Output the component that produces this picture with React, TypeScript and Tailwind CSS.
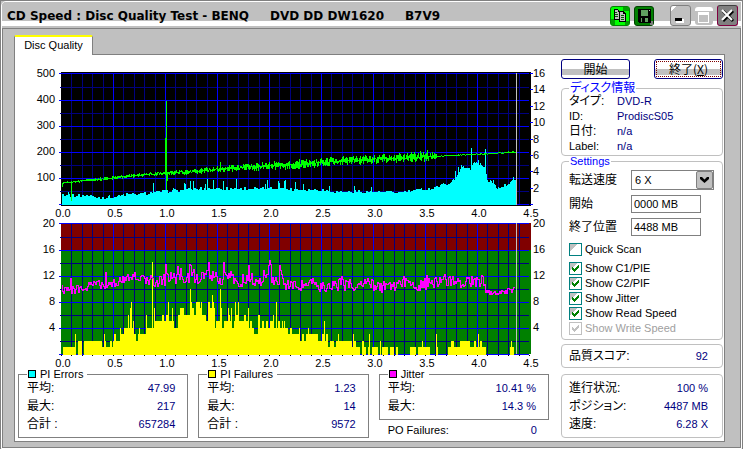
import React from "react";

type Point = [number, number];
type Band = [number, number, number];

const noise = (n: number, seed: number) => {
  const v = Math.sin(n * 127.1 + seed * 311.7) * 43758.5453;
  return v - Math.floor(v);
};

const at = (pts: Point[], x: number) => {
  for (let i = 1; i < pts.length; i++) {
    if (x <= pts[i][0]) {
      const [x0, y0] = pts[i - 1];
      const [x1, y1] = pts[i];
      return y0 + ((y1 - y0) * (x - x0)) / (x1 - x0);
    }
  }
  return pts[pts.length - 1][1];
};

const bar = (x: number, top: number, bottom: number) => `M${x} ${top}h1V${bottom}h-1z`;

/* PI errors: top of each column */
const piBase: Point[] = [
  [61, 194], [75, 195], [90, 195], [97, 197], [116, 196], [125, 194], [145, 193], [160, 191], [180, 190], [200, 188],
  [230, 188], [280, 188], [300, 189], [320, 189], [335, 191], [370, 191], [400, 192], [420, 189], [430, 188], [440, 185],
  [450, 182], [455, 178], [458, 171], [463, 167], [470, 168], [474, 161], [482, 166], [485, 167], [487, 180], [492, 182],
  [499, 189], [503, 186], [510, 181], [514, 178], [517, 178],
];
const piSpikes: Record<number, number> = {
  68: 192, 153: 183, 173: 188, 184: 183, 185: 184, 190: 181, 193: 181, 205: 184, 207: 179, 213: 180, 223: 181, 236: 179,
  265: 184, 267: 180, 278: 181, 279: 183, 284: 181, 285: 180, 295: 182, 303: 184, 329: 186, 354: 186, 371: 187,
  455: 171, 458: 167, 461: 165, 471: 148, 478: 160, 480: 163, 485: 149, 493: 180, 513: 177,
};
/* read speed: centre and spread */
const speedLine: Point[] = [
  [61, 183], [71, 182], [90, 180], [110, 178], [130, 176], [150, 174], [165, 173], [190, 172], [220, 169], [250, 167],
  [290, 165], [340, 161], [400, 158], [440, 156], [480, 154], [516, 152],
];
const speedSpread: Point[] = [
  [61, 1], [100, 2], [165, 2], [200, 3], [250, 4], [300, 5], [400, 5], [415, 6], [428, 7], [434, 4], [438, 1], [516, 1],
];
/* jitter: centre line and peaks */
const jitterLine: Point[] = [
  [62, 288], [68, 291], [75, 289], [90, 285], [100, 284], [106, 286], [120, 281], [130, 277], [135, 275], [145, 280],
  [160, 281], [170, 277], [180, 278], [190, 276], [200, 279], [208, 274], [220, 279], [230, 276], [240, 281], [250, 278],
  [262, 283], [268, 274], [273, 279], [280, 278], [284, 281], [290, 287], [300, 285], [308, 282], [318, 286],
  [340, 284], [355, 286], [370, 283], [380, 287], [390, 286], [400, 284], [405, 281], [415, 288], [425, 284], [435, 283],
  [445, 280], [470, 281], [483, 280], [486, 291], [495, 292], [505, 291], [515, 289],
];
const jitterPeaks: Record<number, number> = {
  71: 278, 106: 272, 166: 264, 178: 266, 181: 268, 190: 264, 191: 265, 194: 269, 207: 270, 209: 262, 224: 262, 249: 265,
  264: 270, 269: 265, 270: 260, 271: 264, 280: 265, 281: 270, 342: 276, 350: 279, 427: 275, 450: 276, 483: 276,
};
/* PI failures: lowest and highest count around each position */
const pifBands: Band[] = [
  [61, 0, 0], [63, 1, 1], [75, 0, 2], [90, 1, 2], [105, 1, 2], [113, 1, 3], [118, 2, 3], [124, 3, 4], [128, 4, 6],
  [132, 3, 4], [136, 2, 3], [139, 3, 4], [150, 3, 4], [155, 4, 6], [170, 4, 6], [178, 6, 7], [190, 6, 8], [200, 5, 8],
  [210, 7, 8], [215, 4, 8], [222, 4, 6], [235, 4, 6], [250, 3, 6], [260, 3, 5], [275, 3, 5], [285, 2, 4], [300, 2, 3],
  [320, 1, 3], [335, 1, 2], [350, 0, 2], [366, 0, 1], [401, 0, 0], [408, 0, 1], [451, 1, 2], [478, 1, 2], [486, 0, 0],
  [510, 1, 1], [514, 0, 0], [517, 0, 0],
];
const pifSpikes: Record<number, number> = {
  75: 3, 104: 3, 120: 4, 128: 6, 130: 7, 131: 8, 133: 5, 146: 6, 152: 14, 154: 7, 168: 8, 172: 7, 190: 10, 200: 7,
  212: 9, 220: 10, 228: 7, 231: 7, 235: 8, 238: 8, 248: 7, 273: 6, 276: 8, 282: 5, 299: 4, 308: 4, 324: 5, 338: 3,
  353: 3, 369: 3, 380: 2, 422: 2, 436: 3, 452: 2, 478: 3, 511: 2,
};

const range = (a: number, b: number) => Array.from({ length: b - a }, (_, i) => a + i);

const piPath = range(62, 517)
  .map((x) => {
    const step = Math.floor(x / 2);
    const y = piSpikes[x] ?? Math.round(at(piBase, x) - noise(step, 1) * 3 + 2);
    return bar(x, y, 205);
  })
  .join("");

const speedPath =
  range(62, 516)
    .map((x) => {
      const c = at(speedLine, x);
      const s = at(speedSpread, x);
      const up = Math.round(c - noise(x, 2) * s);
      return bar(x, up, Math.max(up + 1, Math.round(c + noise(x, 3) * s)));
    })
    .join("") +
  bar(62, 183, 187) + bar(71, 182, 201) + bar(165, 138, 175) + bar(166, 101, 190) + bar(167, 172, 181) + bar(220, 162, 172);

const jitterY = (x: number) =>
  jitterPeaks[x] ?? Math.round(at(jitterLine, x) + (noise(x, 4) - 0.5) * (x > 486 ? 5 : x < 150 ? 8 : 12));

const jitterPath = range(62, 515)
  .map((x) => {
    const a = jitterY(x);
    const b = jitterY(x + 1);
    return bar(x, Math.min(a, b), Math.max(a, b) + 1);
  })
  .join("");

const pifPath = range(62, 515)
  .map((x) => {
    let band = pifBands[0];
    for (const b of pifBands) if (b[0] <= x) band = b;
    const r = noise(Math.floor(x / 2), 5);
    const n = pifSpikes[x] ?? Math.round(band[1] + (band[2] - band[1]) * r);
    return n > 0 ? bar(x, Math.round(354 - n * 6.55), 355) : "";
  })
  .join("");

const gridX = (i: number) => Math.round(61 + i * 10.4);

function Grid({ ys, minorYs }: { ys: number[]; minorYs: number[] }) {
  const top = ys[0];
  const bottom = ys[ys.length - 1];
  return (
    <g>
      {range(1, 45).filter((i) => i % 5 !== 0).map((i) => (
        <rect key={i} x={gridX(i)} y={top} width="1" height={bottom - top} fill="#000080" />
      ))}
      {minorYs.map((y) => <rect key={y} x="60" y={y} width="469" height="1" fill="#000080" />)}
      {range(1, 9).map((i) => (
        <rect key={i} x={gridX(i * 5)} y={top} width="1" height={bottom - top} fill="#0000ff" />
      ))}
      {ys.map((y) => <rect key={y} x="59" y={y} width="470" height="1" fill="#0000ff" />)}
    </g>
  );
}

function XLabels({ y }: { y: number }) {
  return (
    <g textAnchor="middle">
      {range(0, 10).map((i) => (
        <text key={i} x={63 + i * 52} y={y}>{(i / 2).toFixed(1)}</text>
      ))}
    </g>
  );
}

const chartClass = "block h-auto w-full overflow-visible fill-black text-[11px]";

function ErrorChart() {
  return (
    <svg viewBox="15 65 540 153" className={chartClass} role="img" aria-label="PI Errors">
      <g shapeRendering="crispEdges">
        <rect x="61" y="72" width="470" height="134" fill="#000" />
        <Grid ys={[73, 100, 126, 152, 178, 204]} minorYs={[87, 113, 139, 165, 191]} />
        <path d={piPath} fill="#00ffff" />
        <path d={speedPath} fill="#00ff00" />
        <rect x="516" y="73" width="1" height="132" fill="#c0c0c0" />
        {range(0, 9).map((i) => <rect key={i} x="530" y={73 + Math.round(i * 16.4)} width="3" height="1" fill="#0000ff" />)}
      </g>
      <g textAnchor="end">
        {[500, 400, 300, 200, 100].map((v, i) => <text key={v} x="55" y={77 + i * 26}>{v}</text>)}
      </g>
      {[16, 14, 12, 10, 8, 6, 4, 2].map((v, i) => (
        <text key={v} x="533" y={77 + Math.round(i * 16.4)}>{v}</text>
      ))}
      <XLabels y={217} />
    </svg>
  );
}

function FailureChart() {
  return (
    <svg viewBox="15 218 540 151" className={chartClass} role="img" aria-label="PI Failures and Jitter">
      <g shapeRendering="crispEdges">
        <rect x="61" y="223" width="470" height="27" fill="#800000" />
        <rect x="61" y="250" width="470" height="104" fill="#008000" />
        <Grid ys={[223, 250, 276, 302, 328, 354]} minorYs={[237, 263, 289, 315, 341]} />
        <path d={pifPath} fill="#ffff00" />
        <path d={jitterPath} fill="#ff00ff" />
        <rect x="516" y="223" width="1" height="131" fill="#c0c0c0" />
        {range(0, 46).map((i) => <rect key={i} x={gridX(i)} y="355" width="1" height="1" fill="#000" />)}
      </g>
      <g textAnchor="end">
        {[20, 16, 12, 8, 4].map((v, i) => <text key={v} x="55" y={227 + i * 26}>{v}</text>)}
      </g>
      {[20, 16, 12, 8, 4].map((v, i) => <text key={v} x="533" y={227 + i * 26}>{v}</text>)}
      <XLabels y={367} />
    </svg>
  );
}

const jp = "font-['Liberation_Sans','Noto_Sans_CJK_JP',sans-serif] text-[12px] [font-feature-settings:'palt']";

function Row({ label, value, className }: { label: string; value: string; className: string }) {
  return (
    <div className={`flex justify-between ${className}`}>
      <dt className={jp}>{label}</dt>
      <dd className="text-[#000080]">{value}</dd>
    </div>
  );
}

function Stat({ title, swatch, rows, children }: {
  title: string;
  swatch: string;
  rows: [string, string][];
  children?: React.ReactNode;
}) {
  return (
    <div className="min-w-0 flex-1">
      <fieldset className="border border-[#808080] px-2 pb-1">
        <legend className="flex h-[10px] items-center gap-1 pl-px pr-1 leading-[10px]">
          <span className={`h-2 w-2 border border-black ${swatch}`} />
          {title}
        </legend>
        <dl className="pr-1">
          {rows.map(([l, v]) => <Row key={l} label={l} value={v} className="h-[18px] leading-[18px]" />)}
        </dl>
      </fieldset>
      {children}
    </div>
  );
}

const groupBox = "rounded-[4px] border border-[#c0c0c0] px-[7px]";
const legendClass = "px-px leading-[10px] text-[#0000ff]";

function Check({ label, checked, disabled }: { label: string; checked?: boolean; disabled?: boolean }) {
  return (
    <label className={`flex h-[15px] items-center gap-[3px] ${disabled ? "text-[#a0a0a0]" : ""}`}>
      <span className="grid">
        <input
          type="checkbox"
          defaultChecked={checked}
          disabled={disabled}
          className="col-start-1 row-start-1 h-[13px] w-[13px] appearance-none border border-[#008080] bg-[linear-gradient(135deg,#c0c0c0_35%,#ffffff_35%)] disabled:border-[#c0c0c0] disabled:bg-none"
        />
        {checked && (
          <svg viewBox="0 0 13 13" className="pointer-events-none col-start-1 row-start-1 h-[13px] w-[13px]" shapeRendering="crispEdges">
            <path
              d="M3 5h1v1h1v1h1v-1h1v-1h1v-1h1v-1h1v3h-1v1h-1v1h-1v1h-1v1h-1v-1h-1v-1h-1z"
              fill={disabled ? "#c0c0c0" : "#008000"}
            />
          </svg>
        )}
      </span>
      {label}
    </label>
  );
}

const pushButton =
  "h-5 w-[69px] rounded-[3px] border border-[#000080] bg-[linear-gradient(#ffffff_50%,#c0c0c0_50%,#c0c0c0_85%,#ffffff_85%)] p-px font-['Noto_Sans_CJK_JP',sans-serif] text-[12px] leading-[14px]";

function TitleBar() {
  return (
    <header className="flex h-[26px] items-start rounded-tl-[4px] bg-[linear-gradient(#c0c0c0_19px,#ffffff_19px,#ffffff_24px,#c0c0c0_24px)] pl-[5px] pr-[3px]">
      <h1 className="flex-1 whitespace-pre pt-[6px] font-['DejaVu_Sans',sans-serif] text-[12px] font-bold leading-[16px]">
        {"CD Speed : Disc Quality Test - BENQ     DVD DD DW1620     B7V9"}
      </h1>
      <div className="flex items-center pt-[3px]">
        <button aria-label="Copy" className="mr-1 h-5 w-5 rounded-[3px] border border-[#008000] bg-[#00ff00]">
          <svg viewBox="0 0 18 18" className="block h-[18px] w-[18px]" shapeRendering="crispEdges">
            <path d="M12 0h6v4h-6zM0 12h4v6h-4zM14 14h4v4h-4z" fill="#00a000" />
            <path d="M3 2h4v1h1v1h1v9h-6z" fill="#000" />
            <path d="M4 3h3v2h1v7h-4z" fill="#c0c0c0" />
            <path d="M8 4h5v1h1v1h1v9h-7z" fill="#000" />
            <path d="M9 5h3v2h2v7h-5z" fill="#c0c0c0" />
            <path d="M4 5h2v1h-2zM4 7h3v1h-3zM4 9h3v1h-3zM10 8h3v1h-3zM10 10h3v1h-3zM10 12h3v1h-3z" fill="#006000" />
          </svg>
        </button>
        <button aria-label="Save" className="mr-4 h-5 w-5 rounded-[3px] border border-[#004000] bg-[#008000]">
          <svg viewBox="0 0 18 18" className="block h-[18px] w-[18px]" shapeRendering="crispEdges">
            <path d="M3 2h13v14h-12l-1-1z" fill="#000" />
            <path d="M6 3h7v6h-7z" fill="#60a060" />
            <path d="M6 11h7v4h-7z" fill="#60a060" />
            <path d="M7 11h3v4h-3z" fill="#000" />
            <path d="M14 3h1v1h-1z" fill="#c0c0c0" />
            <path d="M16 14h2v4h-3v-2h1z" fill="#808080" />
          </svg>
        </button>
        <button aria-label="Minimize" className="mr-1 h-[21px] w-[21px] rounded-[3px] border border-[#808080] bg-[linear-gradient(135deg,#ffffff_15%,#c0c0c0_15%)]">
          <svg viewBox="0 0 19 19" className="block h-[19px] w-[19px]" shapeRendering="crispEdges">
            <path d="M5 13h8v4h-8z" fill="#fff" />
            <path d="M4 12h7v3h-7z" fill="#000" />
          </svg>
        </button>
        <button aria-label="Maximize" disabled className="mr-1 h-[18px] w-[18px] rounded-[3px] border-t-4 border-white bg-[#c0c0c0]">
          <svg viewBox="0 0 18 14" className="block h-[14px] w-[18px]" shapeRendering="crispEdges">
            <path d="M3 1h11v11h-11z M4 4v7h9v-7z" fill="#fff" fillRule="evenodd" />
          </svg>
        </button>
        <button aria-label="Close" className="h-[21px] w-[21px] rounded-[3px] border border-[#800040] border-t-[#404040] bg-[#808080]">
          <svg viewBox="0 0 19 19" className="block h-[19px] w-[19px]">
            <path d="M5 5l10 10M15 5l-10 10" stroke="#000" strokeWidth="3" />
            <path d="M4 4l10 10M14 4l-10 10" stroke="#fff" strokeWidth="2" />
          </svg>
        </button>
      </div>
    </header>
  );
}

export default function App() {
  return (
    <div className="border border-[#808080] bg-[#c0c0c0] font-['Liberation_Sans','Noto_Sans_CJK_JP',sans-serif] text-[11px] leading-[15px] text-black">
      <div className="rounded-tl-[5px] border border-white">
        <TitleBar />
        <main className="border border-[#808080] pb-[5px] pl-[11px] pr-[15px] pt-[6px]">
          <div role="tablist" className="flex">
            <button
              role="tab"
              aria-selected="true"
              className="-mb-px h-5 w-[79px] rounded-t-[2px] border-l border-r border-t-2 border-l-[#808080] border-r-[#808080] border-t-[#ffff00] bg-white pb-[2px]"
            >
              Disc Quality
            </button>
          </div>
          <div className="flex border border-[#808080] bg-white pb-[3px] pr-px">
            <div className="min-w-0 flex-1 pt-[10px]">
              <ErrorChart />
              <FailureChart />
              <div className="flex gap-[10px] pl-[3px] pr-[6px]">
                <Stat title="PI Errors" swatch="bg-[#00ffff]" rows={[["平均:", "47.99"], ["最大:", "217"], ["合計 :", "657284"]]} />
                <Stat title="PI Failures" swatch="bg-[#ffff00]" rows={[["平均:", "1.23"], ["最大:", "14"], ["合計 :", "9572"]]} />
                <Stat title="Jitter" swatch="bg-[#ff00ff]" rows={[["平均:", "10.41 %"], ["最大:", "14.3 %"]]}>
                  <dl className="flex justify-between pl-[9px] pr-3 pt-[3px]">
                    <dt>PO Failures:</dt>
                    <dd className="text-[#000080]">0</dd>
                  </dl>
                </Stat>
              </div>
            </div>
            <aside className="ml-[6px] w-[162px] shrink-0 pt-1">
              <div className="flex justify-between">
                <button className={pushButton}>開始</button>
                <button className={pushButton}>
                  <span className="block h-4 border border-dotted border-[#800000]">終了(<u>X</u>)</span>
                </button>
              </div>
              <fieldset className={`mt-1 h-[73px] ${groupBox}`}>
                <legend className={`${legendClass} ${jp}`}>ディスク情報</legend>
                <dl className="grid grid-cols-[48px_1fr] pt-px">
                  {[["タイプ:", "DVD-R"], ["ID:", "ProdiscS05"], ["日付:", "n/a"], ["Label:", "n/a"]].map(([l, v]) => (
                    <React.Fragment key={l}>
                      <dt className={`h-[15px] leading-[15px] ${/^[A-Z]/.test(l) ? "" : jp}`}>{l}</dt>
                      <dd className="text-[#000080]">{v}</dd>
                    </React.Fragment>
                  ))}
                </dl>
              </fieldset>
              <fieldset className={`${groupBox} pb-[3px]`}>
                <legend className={legendClass}>Settings</legend>
                <div className="grid grid-cols-[62px_1fr] items-center gap-y-[5px] pt-1">
                  <label htmlFor="speed" className={jp}>転送速度</label>
                  <div className="relative h-5 w-[83px]">
                    <select id="speed" className="h-5 w-full appearance-none border border-[#808080] bg-white px-[3px]">
                      <option>6 X</option>
                    </select>
                    <span className="pointer-events-none absolute right-px top-px flex h-[18px] w-[17px] items-center justify-center rounded-[2px] border border-[#808080] bg-[#c0c0c0]">
                      <svg viewBox="0 0 9 6" className="h-[6px] w-[9px]">
                        <path d="M0 0h2l2.500 2.500L7 0h2v2L4.500 6 0 2z" />
                      </svg>
                    </span>
                  </div>
                  <label htmlFor="start" className={jp}>開始</label>
                  <input id="start" defaultValue="0000 MB" className="h-[18px] w-[70px] border border-[#808080] px-[2px]" />
                  <label htmlFor="end" className={jp}>終了位置</label>
                  <input id="end" defaultValue="4488 MB" className="h-[18px] w-[70px] border border-[#808080] px-[2px]" />
                </div>
                <div className="pb-1 pt-[6px]">
                  <Check label="Quick Scan" />
                </div>
                <Check label="Show C1/PIE" checked />
                <Check label="Show C2/PIF" checked />
                <Check label="Show Jitter" checked />
                <Check label="Show Read Speed" checked />
                <Check label="Show Write Speed" checked disabled />
              </fieldset>
              <dl className={`mt-1 py-[2px] pr-[14px] ${groupBox}`}>
                <Row label="品質スコア:" value="92" className="h-[18px] leading-[18px]" />
              </dl>
              <dl className={`mt-[6px] py-1 pr-[14px] ${groupBox}`}>
                <Row label="進行状況:" value="100 %" className="h-[18px] leading-[18px]" />
                <Row label="ポジション:" value="4487 MB" className="h-[18px] leading-[18px]" />
                <Row label="速度:" value="6.28 X" className="h-[18px] leading-[18px]" />
              </dl>
            </aside>
          </div>
        </main>
      </div>
    </div>
  );
}
